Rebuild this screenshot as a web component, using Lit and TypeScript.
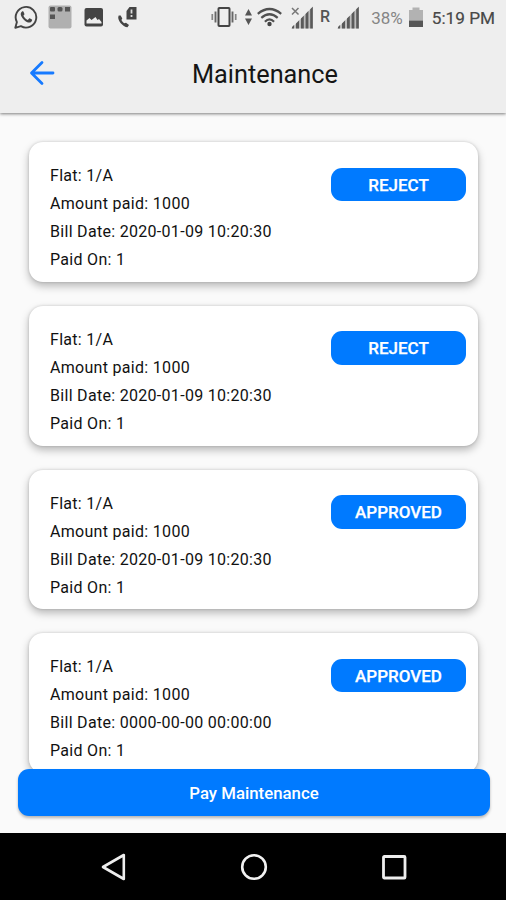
import { LitElement, html, css, svg } from "lit";
import { customElement, property } from "lit/decorators.js";

interface Bill {
  flat: string;
  amount: number;
  billDate: string;
  paidOn: string;
  status: string;
}

const BILLS: Bill[] = [
  { flat: "1/A", amount: 1000, billDate: "2020-01-09 10:20:30", paidOn: "1", status: "REJECT" },
  { flat: "1/A", amount: 1000, billDate: "2020-01-09 10:20:30", paidOn: "1", status: "REJECT" },
  { flat: "1/A", amount: 1000, billDate: "2020-01-09 10:20:30", paidOn: "1", status: "APPROVED" },
  { flat: "1/A", amount: 1000, billDate: "0000-00-00 00:00:00", paidOn: "1", status: "APPROVED" },
];

const signalBars = svg`
  <path d="M0 22.5 L22 0.5 V22.5 Z" fill="#bdbdbd"/>
  <path d="M1 22.5v-1.5l2-2v3.5zM5 22.5v-5l3-3v8zM10 22.5v-10l2.8-2.8v12.8zM14.6 22.5v-14.6l2.8-2.8v17.4zM19.2 22.5v-19.2l2.6-2.6v21.8z" fill="#5a5a5a"/>`;

@customElement("status-bar")
export class StatusBar extends LitElement {
  static styles = css`
    :host { display: flex; align-items: center; justify-content: space-between; height: 36px; padding: 0 11px 0 14px; color: #4c4c4c; }
    .group { display: flex; align-items: center; height: 36px; }
    svg { display: block; flex: none; margin-bottom: 2px; }
    .notes { gap: 9.8px; }
    .updown { margin-left: 7px; }
    .wifi { margin-left: 5px; }
    .sim1 { margin-left: 9.5px; }
    .roam { font-size: 16px; font-weight: 500; line-height: 36px; margin: 0 7px 2px 7px; color: #555; }
    .level { font-size: 17px; line-height: 36px; margin-left: 11px; color: #858585; }
    .battery { margin-left: 6px; }
    .clock { font-size: 17.2px; line-height: 36px; margin-left: 9px; color: #484848; white-space: nowrap; -webkit-text-stroke: 0.2px #484848; }
    .shift { margin-right: 1px; }
  `;

  render() {
    return html`
      <div class="group notes">
        <svg width="24" height="24" viewBox="0 0 24 24">
          <path d="M1.3 22.8 L2.9 17.1 A10.3 10.3 0 1 1 6.9 21.2 Z" fill="none" stroke="#444" stroke-width="1.9" stroke-linejoin="round"/>
          <path d="M8.3 6.3c-1.6 1-2 2.9-1 4.900 1.500 3 3.700 5.100 6.700 6.200 1.800.6 3.900-.3 4.200-2.400.1-.5-2.700-1.900-3.100-1.600l-1.300 1.500c-2-.8-3.500-2.200-4.400-4.100l1-1.400c.2-.4-.9-3-1.300-3.100z" fill="#444"/>
        </svg>
        <svg width="24" height="24" viewBox="0 0 24 24">
          <rect x=".5" y=".5" width="23" height="23" rx="2" fill="#b0b0b0"/>
          <g fill="#555"><rect x="2" y="2" width="5" height="4.500" rx="1"/><rect x="9.500" y="2" width="5" height="4.500" rx="1.500"/><rect x="17" y="2" width="5" height="4.500"/><rect x="2" y="9.500" width="5" height="4.500"/></g>
        </svg>
        <svg width="24" height="24" viewBox="0 0 24 24">
          <rect x="2.500" y="3" width="18.500" height="18.500" rx="2" fill="#444"/>
          <path d="M4.500 18.500v-3l3-2.500 2 2 4-3 2 3 1.500-1 2.500 3v1.500z" fill="#eee"/>
        </svg>
        <svg width="24" height="24" viewBox="0 0 24 24">
          <path d="M3.700 10.500C1.300 14.500 8 22.300 12.500 22.300l1.500-2.300-3-2.300-1.900.5c-1.200-.8-2.100-1.900-2.700-3.100l.9-1.700-1.600-2.900z" fill="#444"/>
          <path d="M11.500 6 14.500 2h7v12.500h-10z" fill="#444"/>
          <path d="M16.500 4.500v4M16.500 10v2" stroke="#ddd" stroke-width="1.800"/>
        </svg>
      </div>
      <div class="group">
        <svg class="shift" width="26" height="22" viewBox="0 0 26 22">
          <rect x="7.500" y="2" width="11" height="18" rx=".8" fill="none" stroke="#454545" stroke-width="2"/>
          <path d="M4.500 5.500v11M21.500 5.500v11" stroke="#666" stroke-width="1.900"/>
          <path d="M1.300 8v6M24.700 8v6" stroke="#858585" stroke-width="1.700"/>
        </svg>
        <svg class="updown" width="7" height="18" viewBox="0 0 7 18">
          <path d="M0 7.500 3.500 1 7 7.500zM0 10.500h7L3.500 17z" fill="#555"/>
        </svg>
        <svg class="wifi" width="25" height="20" viewBox="0 0 25 20">
          <g fill="none" stroke="#505050" stroke-width="2.200"><path d="M.8 6.800Q12.500-2.800 24.200 6.800"/><path d="M4.300 10.800Q12.500 3.700 20.700 10.800"/><path d="M7.900 14.700Q12.500 10.200 17.100 14.700"/></g>
          <circle cx="12.500" cy="17" r="2.200" fill="#444"/>
        </svg>
        <svg class="sim1" width="22" height="23" viewBox="0 0 22 23">
          ${signalBars}
          <path d="M1 2 7.500 8.500M7.500 2 1 8.500" stroke="#777" stroke-width="1.500"/>
        </svg>
        <span class="roam">R</span>
        <svg class="shift" width="22" height="23" viewBox="0 0 22 23">${signalBars}</svg>
        <span class="level">38%</span>
        <svg class="battery" width="14" height="20" viewBox="0 0 14 20">
          <path d="M0 3h3.500V.5h7V3H14v10.500H0z" fill="#b2b2b2"/>
          <path d="M0 13.500h14V20H0z" fill="#565656"/>
        </svg>
        <span class="clock">5:19 PM</span>
      </div>
    `;
  }
}

@customElement("bill-card")
export class BillCard extends LitElement {
  @property({ attribute: false }) bill!: Bill;

  static styles = css`
    :host {
      display: flex; justify-content: space-between; align-items: flex-start; flex: none;
      box-sizing: border-box; height: 139.800px; padding: 20px 12px 0 21px;
      background: #fff; border-radius: 14px;
      box-shadow: 0 4px 8px rgba(0, 0, 0, 0.27), 0 0 3px rgba(0, 0, 0, 0.16);
    }
    .line { font-size: 16px; letter-spacing: 0.3px; line-height: 28px; color: #111; white-space: nowrap; }
    .status {
      width: 135px; height: 33.500px; margin-top: 5.500px; border: 0; padding: 0; border-radius: 11px;
      background: #007aff; color: #fff; font: 500 17px/34px Roboto, sans-serif;
      -webkit-text-stroke: 0.25px #fff;
    }
  `;

  render() {
    const b = this.bill;
    return html`
      <div>
        <div class="line">Flat: ${b.flat}</div>
        <div class="line">Amount paid: ${b.amount}</div>
        <div class="line">Bill Date: ${b.billDate}</div>
        <div class="line">Paid On: ${b.paidOn}</div>
      </div>
      <button class="status">${b.status}</button>
    `;
  }
}

@customElement("app-root")
export class AppRoot extends LitElement {
  static styles = css`
    :host { display: flex; flex-direction: column; height: 900px; overflow: hidden; background: #fafafa; font-family: Roboto, sans-serif; }
    .header { flex: none; height: 113px; background: #eee; box-shadow: 0 1px 3px rgba(0, 0, 0, 0.5); z-index: 1; }
    .bar { display: grid; grid-template-columns: 84px 1fr 60px; align-items: center; height: 77px; }
    .back { display: block; margin: 0 0 4px 29px; }
    .title { margin: 0; text-align: center; font-size: 25.3px; font-weight: 400; line-height: 78px; color: #151515; }
    .list { flex: none; height: 656px; box-sizing: border-box; padding: 29px 28px 0 29px; overflow: hidden; display: flex; flex-direction: column; gap: 24px; }
    .footer { flex: 1; padding: 0 16px 0 18px; z-index: 1; }
    .pay {
      display: block; width: 100%; height: 47px; border: 0; padding: 0; border-radius: 11px;
      background: #007aff; color: #fff; font: 500 16.8px/48px Roboto, sans-serif;
      box-shadow: 0 2px 3px rgba(0, 0, 0, 0.28);
    }
    .nav { flex: none; box-sizing: border-box; height: 67px; padding-left: 1px; background: #000; display: flex; justify-content: center; align-items: center; gap: 112px; }
    .nav svg { display: block; }
  `;

  render() {
    return html`
      <header class="header">
        <status-bar></status-bar>
        <div class="bar">
          <svg class="back" width="26" height="26" viewBox="0 0 26 26">
            <path d="M24 13H3M13 2.500 2.500 13 13 23.500" fill="none" stroke="#167aff" stroke-width="2.800" stroke-linecap="round" stroke-linejoin="round"/>
          </svg>
          <h1 class="title">Maintenance</h1>
        </div>
      </header>
      <main class="list">${BILLS.map((bill) => html`<bill-card .bill=${bill}></bill-card>`)}</main>
      <div class="footer"><button class="pay">Pay Maintenance</button></div>
      <nav class="nav">
        <svg width="28" height="28" viewBox="0 0 28 28"><path d="M23.800 2v24L3 14z" fill="none" stroke="#eee" stroke-width="2.600" stroke-linejoin="round"/></svg>
        <svg width="28" height="28" viewBox="0 0 28 28"><circle cx="14" cy="14" r="11.800" fill="none" stroke="#f2f2f2" stroke-width="2.600"/></svg>
        <svg width="28" height="28" viewBox="0 0 28 28"><rect x="3.500" y="3.500" width="21.500" height="21.500" rx=".8" fill="none" stroke="#eee" stroke-width="2.800"/></svg>
      </nav>
    `;
  }
}
